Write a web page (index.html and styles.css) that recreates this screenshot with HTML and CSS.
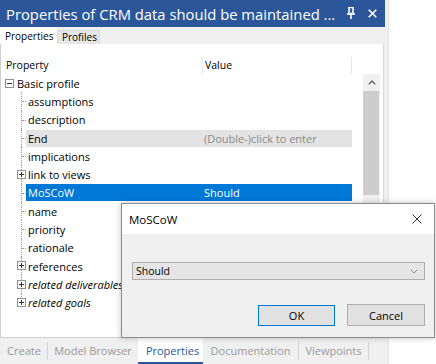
FILE: index.html
```html
<!DOCTYPE html>
<html>
<head>
<meta charset="utf-8">
<link rel="stylesheet" href="styles.css">
</head>
<body>
<div class="app">
  <div class="panel">
    <div class="titlebar">
      <span class="title">Properties of CRM data should be maintained ...</span>
      <span class="ticons">
        <svg class="pin" width="10" height="12" viewBox="0 0 10 12"><path d="M3 0.5h4v6H3z" fill="none" stroke="#fff" stroke-width="1.6"/><path d="M1 7h8" stroke="#fff" stroke-width="1.6"/><path d="M5 7v5" stroke="#fff" stroke-width="1.6"/></svg>
        <svg class="close" width="9" height="9" viewBox="0 0 9 9"><path d="M0.7 0.7l7.6 7.6M8.3 0.7L0.7 8.3" stroke="#fff" stroke-width="1.6"/></svg>
      </span>
    </div>
    <div class="tabs">
      <div class="tab active">Properties</div>
      <div class="tab">Profiles</div>
    </div>
    <div class="content">
      <div class="header">
        <div class="hcol hprop">Property</div>
        <div class="hcol hval">Value</div>
      </div>
      <div class="body">
        <div class="tree">
          <div class="row root"><span class="box minus"></span><span class="rtext">Basic profile</span></div>
          <div class="row child"><span class="indent"></span><span class="lbl">assumptions</span><span class="val"></span></div>
          <div class="row child"><span class="indent"></span><span class="lbl">description</span><span class="val"></span></div>
          <div class="row child grey"><span class="indent"></span><span class="lbl">End</span><span class="val hint">(Double-)click to enter</span></div>
          <div class="row child"><span class="indent"></span><span class="lbl">implications</span><span class="val"></span></div>
          <div class="row child"><span class="indent"><span class="box plus"></span></span><span class="lbl">link to views</span><span class="val"></span></div>
          <div class="row child sel"><span class="indent"></span><span class="lbl">MoSCoW</span><span class="val">Should</span></div>
          <div class="row child"><span class="indent"></span><span class="lbl">name</span><span class="val"></span></div>
          <div class="row child"><span class="indent"></span><span class="lbl">priority</span><span class="val"></span></div>
          <div class="row child"><span class="indent"></span><span class="lbl">rationale</span><span class="val"></span></div>
          <div class="row child"><span class="indent"><span class="box plus"></span></span><span class="lbl">references</span><span class="val"></span></div>
          <div class="row child"><span class="indent"><span class="box plus"></span></span><span class="lbl it">related deliverables</span><span class="val"></span></div>
          <div class="row child last"><span class="indent"><span class="box plus"></span></span><span class="lbl it">related goals</span><span class="val"></span></div>
        </div>
        <div class="scroll">
          <div class="sbtn"><svg width="8" height="5" viewBox="0 0 8 5"><path d="M0.8 4.2L4 1 7.2 4.2" fill="none" stroke="#606060" stroke-width="1.3"/></svg></div>
          <div class="thumb"></div>
        </div>
      </div>
    </div>
    <div class="btabs">
      <div class="bt w-create">Create</div>
      <div class="bsep"></div>
      <div class="bt w-model">Model Browser</div>
      <div class="bt w-props active">Properties</div>
      <div class="bt w-doc">Documentation</div>
      <div class="bsep"></div>
      <div class="bt w-view">Viewpoints</div>
      <div class="bsep"></div>
    </div>
  </div>

  <div class="dialog">
    <div class="dtitle">
      <span class="dname">MoSCoW</span>
      <svg width="10" height="10" viewBox="0 0 10 10"><path d="M0.5 0.5l9 9M9.5 0.5l-9 9" stroke="#333" stroke-width="1"/></svg>
    </div>
    <div class="dbody">
      <div class="select"><span>Should</span><svg width="8" height="5" viewBox="0 0 8 5"><path d="M0.8 0.8L4 4 7.2 0.8" fill="none" stroke="#888" stroke-width="1"/></svg></div>
      <div class="buttons">
        <div class="btn ok">OK</div>
        <div class="btn">Cancel</div>
      </div>
    </div>
  </div>
</div>
</body>
</html>
```
FILE: styles.css
```css
* { box-sizing: border-box; }
html, body { margin: 0; padding: 0; }
body {
  width: 436px;
  height: 364px;
  overflow: hidden;
  background: #fff;
  font-family: "Open Sans", "Noto Sans", sans-serif;
  color: #000;
}
.app {
  position: relative;
  width: 436px;
  height: 364px;
}
.panel {
  width: 389px;
  height: 364px;
  background: #f0f0f0;
  border-right: 1px solid #e3e3e3;
  display: flex;
  flex-direction: column;
}
.titlebar {
  width: 385px;
  height: 27px;
  flex: none;
  background: #2b579a;
  color: #fff;
  display: flex;
  align-items: center;
  justify-content: space-between;
  padding: 0 8px 0 6px;
}
.title {
  font-size: 14.8px;
  white-space: nowrap;
}
.ticons {
  display: flex;
  align-items: center;
  gap: 12px;
}
.ticons .pin { margin-top: -1px; }
.tabs {
  height: 17px;
  flex: none;
  display: flex;
  align-items: flex-end;
  font-size: 10px;
  width: 385px;
}
.tab {
  height: 14px;
  padding: 0 2px 0 4px;
  line-height: 13px;
  background: #e6e6e6;
  border: 1px solid #d9d9d9;
  border-bottom: none;
}
.tab.active {
  height: 16px;
  width: 57px;
  background: #fff;
  border: none;
  line-height: 16px;
  padding-left: 5px;
}
.content {
  width: 384px;
  height: 294px;
  flex: none;
  background: #fff;
  border-left: 1px solid #cfcfcf;
  border-right: 1px solid #dadada;
  border-bottom: 1px solid #d0d0d0;
  padding-top: 13px;
  font-size: 11px;
}
.header {
  height: 17px;
  display: flex;
  align-items: center;
  font-size: 10.5px;
}
.hcol { height: 17px; line-height: 17px; }
.hprop {
  width: 202px;
  padding-left: 5px;
  border-right: 1px solid #e5e5e5;
}
.hval {
  width: 149px;
  padding-left: 2px;
  border-right: 1px solid #e5e5e5;
}
.body {
  display: flex;
  height: 263px;
}
.tree {
  width: 351px;
  margin-right: 11px;
}
.scroll {
  width: 17px;
  background: #f0f0f0;
  display: flex;
  flex-direction: column;
}
.sbtn {
  height: 17px;
  display: flex;
  align-items: center;
  justify-content: center;
}
.thumb {
  height: 104px;
  background: #cdcdcd;
  margin: 0 1px 0 0;
}
.row {
  display: flex;
  align-items: center;
  height: 18.3px;
  white-space: nowrap;
}
.root { padding-left: 4px; }
.rtext { margin-left: 3px; }
.box {
  width: 9px;
  height: 9px;
  border: 1px solid #919191;
  background: #fff;
  position: relative;
  flex: none;
}
.box::before {
  content: "";
  position: absolute;
  left: 1px;
  top: 3px;
  width: 5px;
  height: 1px;
  background: #333;
}
.box.plus::after {
  content: "";
  position: absolute;
  left: 3px;
  top: 1px;
  width: 1px;
  height: 5px;
  background: #333;
}
.indent {
  width: 25px;
  height: 100%;
  flex: none;
  position: relative;
}
.indent::before {
  content: "";
  position: absolute;
  left: 20px;
  top: 0;
  bottom: 0;
  border-left: 1px dotted #a0a0a0;
}
.indent::after {
  content: "";
  position: absolute;
  left: 21px;
  top: 9px;
  width: 4px;
  border-top: 1px dotted #a0a0a0;
}
.last .indent::before { bottom: 50%; }
.indent .box {
  position: absolute;
  left: 16px;
  top: 4.5px;
  z-index: 1;
}
.lbl {
  width: 177px;
  height: 17px;
  line-height: 17px;
  padding-left: 2px;
  overflow: hidden;
}
.lbl.it { font-style: italic; }
.val {
  width: 149px;
  height: 17px;
  line-height: 17px;
  padding-left: 1px;
}
.grey .lbl, .grey .val { background: #e3e3e3; }
.hint { color: #8a8a8a; }
.sel .lbl, .sel .val { background: #0078d7; color: #fff; }
.btabs {
  flex: 1;
  display: flex;
  align-items: stretch;
  font-size: 11px;
  color: #9a9a9a;
  padding-left: 1px;
}
.bt {
  display: flex;
  align-items: center;
  justify-content: center;
  padding-bottom: 1px;
}
.bsep {
  width: 1px;
  background: #d4d4d4;
  margin: 4px 0 4px;
}
.w-create { width: 46px; }
.w-model { width: 90px; }
.w-props { width: 65px; }
.w-doc { width: 95px; }
.w-view { width: 69px; }
.bt.active {
  background: #fff;
  color: #2b579a;
  border-bottom: 2px solid #2b579a;
  padding-bottom: 0;
  padding-left: 4px;
}
.dialog {
  position: absolute;
  left: 121px;
  top: 203px;
  width: 314px;
  height: 135px;
  border: 1px solid #8c8c8c;
  background: #f0f0f0;
  box-shadow: 0 0 6px rgba(0,0,0,0.25);
  display: flex;
  flex-direction: column;
}
.dtitle {
  height: 30px;
  background: #fff;
  display: flex;
  align-items: center;
  justify-content: space-between;
  padding: 0 12px 0 7px;
  font-size: 11.5px;
}
.dbody {
  flex: 1;
  padding: 28px 10px 0 10px;
}
.select {
  height: 18px;
  width: 293px;
  background: #e5e5e5;
  border: 1px solid #adadad;
  display: flex;
  align-items: center;
  justify-content: space-between;
  padding: 0 6px 0 3px;
  font-size: 10.5px;
}
.buttons {
  display: flex;
  justify-content: flex-end;
  gap: 12px;
  margin-top: 24px;
  margin-right: -1px;
}
.btn {
  width: 78px;
  height: 22px;
  background: #e1e1e1;
  border: 1px solid #adadad;
  display: flex;
  align-items: center;
  justify-content: center;
  font-size: 11px;
}
.btn.ok {
  border: 1px solid #0078d7;
  width: 77px;
  height: 21px;
  margin-top: 1px;
}
```
